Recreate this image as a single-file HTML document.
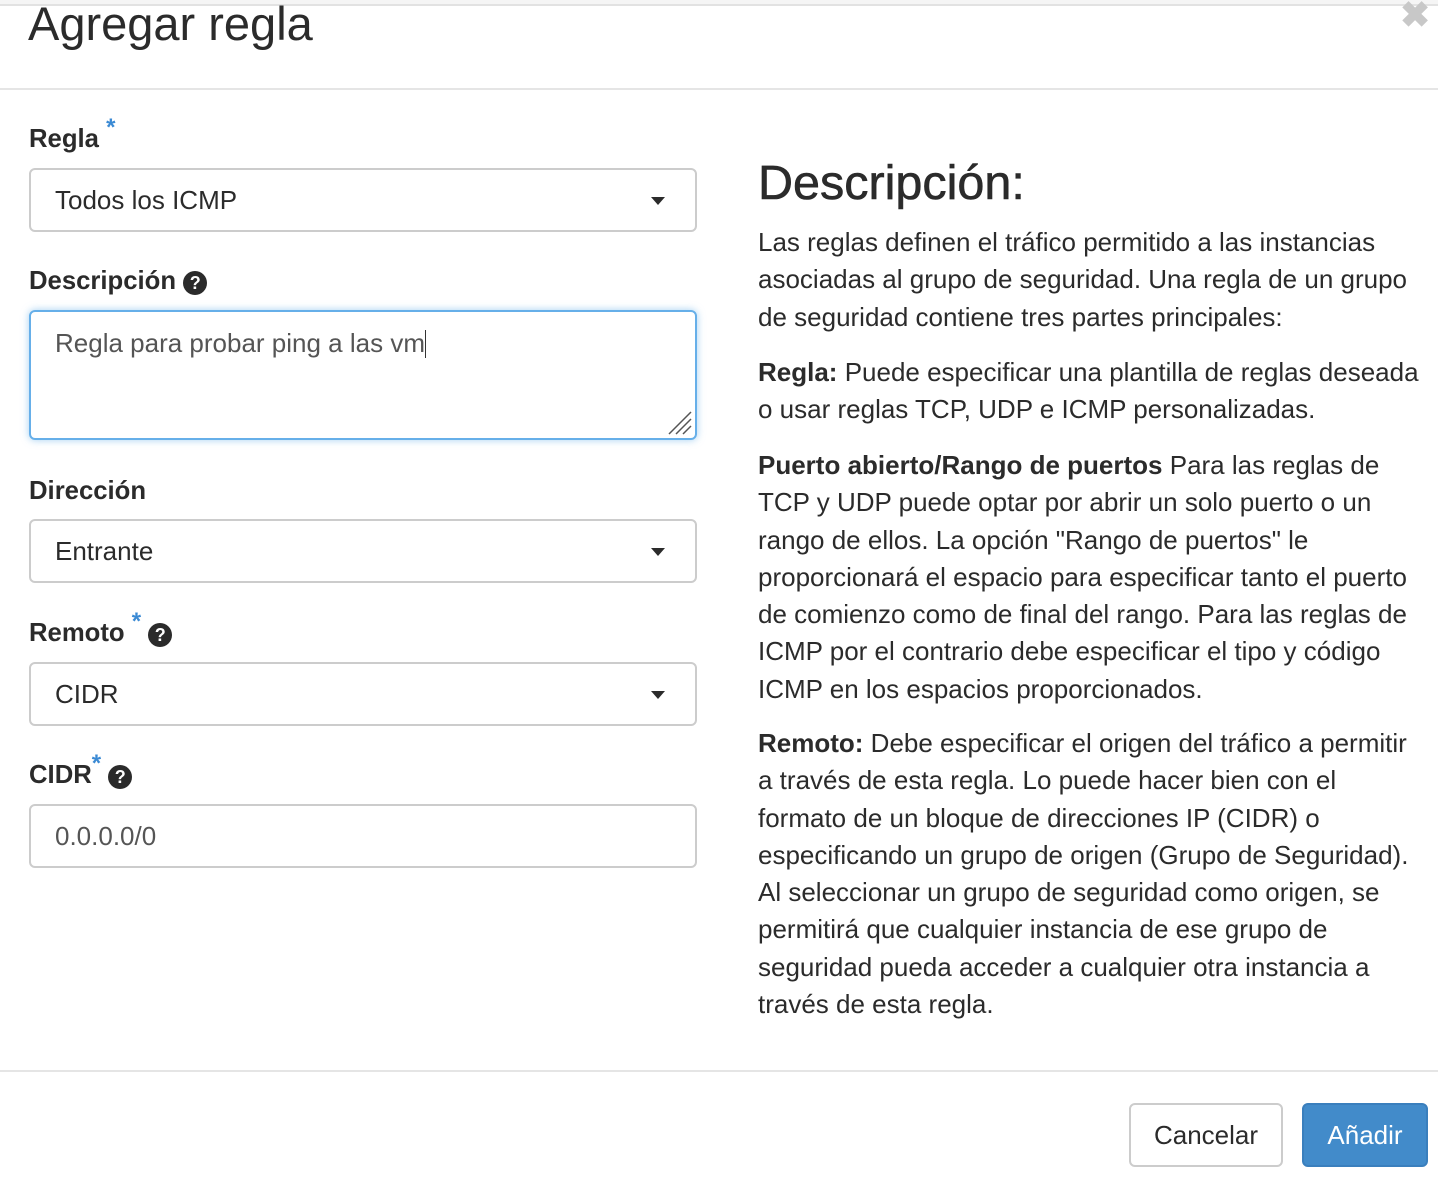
<!DOCTYPE html>
<html><head><meta charset="utf-8"><style>
*{box-sizing:border-box;margin:0;padding:0}
body{width:1438px;height:1196px;background:#fff;font-family:"Liberation Sans",Arial,sans-serif;color:#333;position:relative;overflow:hidden}
.a{position:absolute}
.topbar{left:0;top:0;width:1438px;height:6px;background:#f5f5f5;border-bottom:2px solid #e2e2e2}
.title{left:28px;top:-5px;font-size:47px;line-height:58px;color:#2b2b2b}
.hline{left:0;width:1438px;height:2px;background:#e5e5e5}
.lbl{left:29px;font-size:25.7px;font-weight:bold;line-height:30px;color:#2b2b2b;white-space:nowrap}
.star{color:#3b8ad4;font-size:24px;position:relative;top:-12px}
.q{display:inline-block;width:24px;height:24px;border-radius:50%;background:#2b2b2b;color:#fff;font-size:18px;line-height:24px;text-align:center;vertical-align:0px;font-weight:bold}
.box{left:29px;width:668px;height:64px;border:2px solid #ccc;border-radius:6px;font-size:26px;padding-left:24px;line-height:60px;color:#2b2b2b}
.caret{position:absolute;right:30px;top:27px;width:0;height:0;border-left:7px solid transparent;border-right:7px solid transparent;border-top:8px solid #2b2b2b}
.rt{left:758px;font-size:26px;line-height:37.3px;color:#2b2b2b;white-space:nowrap}
.btn{top:1103px;height:64px;border-radius:6px;font-size:26px;line-height:60px;text-align:center}
</style></head><body>
<div class="a topbar"></div>
<div class="a title">Agregar regla</div>
<div class="a" style="left:1400px;top:-6px;font-size:36px;font-weight:bold;color:#c8c8c8">✖</div>
<div class="a hline" style="top:88px"></div>

<div class="a lbl" style="top:124px">Regla <span class="star">*</span></div>
<div class="a box" style="top:168px">Todos los ICMP<div class="caret"></div></div>

<div class="a lbl" style="top:266px">Descripción <span class="q">?</span></div>
<div class="a box" style="top:310px;height:130px;border-color:#66afe9;box-shadow:0 0 8px rgba(102,175,233,.6);line-height:30px;padding-top:16px;color:#555">Regla para probar ping a las vm<span style="display:inline-block;width:1px;height:28px;background:#333;vertical-align:-6px"></span>
<svg style="position:absolute;right:2px;bottom:2px" width="26" height="26"><path d="M2 24 L24 2 M9 24 L24 9 M16 24 L24 16" stroke="#555" stroke-width="1.5"/></svg></div>

<div class="a lbl" style="top:476px">Dirección</div>
<div class="a box" style="top:519px">Entrante<div class="caret"></div></div>

<div class="a lbl" style="top:618px">Remoto <span class="star">*</span> <span class="q">?</span></div>
<div class="a box" style="top:662px">CIDR<div class="caret"></div></div>

<div class="a lbl" style="top:760px">CIDR<span class="star">*</span> <span class="q">?</span></div>
<div class="a box" style="top:804px;color:#555">0.0.0.0/0</div>

<div class="a" style="left:758px;top:153px;font-size:48.5px;line-height:60px;color:#2b2b2b;-webkit-text-stroke:0.6px #2b2b2b">Descripción:</div>
<div class="a rt" style="top:224px">Las reglas definen el tráfico permitido a las instancias<br>asociadas al grupo de seguridad. Una regla de un grupo<br>de seguridad contiene tres partes principales:</div>
<div class="a rt" style="top:354px"><b>Regla:</b> Puede especificar una plantilla de reglas deseada<br>o usar reglas TCP, UDP e ICMP personalizadas.</div>
<div class="a rt" style="top:447px"><b>Puerto abierto/Rango de puertos</b> Para las reglas de<br>TCP y UDP puede optar por abrir un solo puerto o un<br>rango de ellos. La opción "Rango de puertos" le<br>proporcionará el espacio para especificar tanto el puerto<br>de comienzo como de final del rango. Para las reglas de<br>ICMP por el contrario debe especificar el tipo y código<br>ICMP en los espacios proporcionados.</div>
<div class="a rt" style="top:725px"><b>Remoto:</b> Debe especificar el origen del tráfico a permitir<br>a través de esta regla. Lo puede hacer bien con el<br>formato de un bloque de direcciones IP (CIDR) o<br>especificando un grupo de origen (Grupo de Seguridad).<br>Al seleccionar un grupo de seguridad como origen, se<br>permitirá que cualquier instancia de ese grupo de<br>seguridad pueda acceder a cualquier otra instancia a<br>través de esta regla.</div>

<div class="a hline" style="top:1070px"></div>
<div class="a btn" style="left:1129px;width:154px;border:2px solid #ccc;color:#2b2b2b">Cancelar</div>
<div class="a btn" style="left:1302px;width:126px;background:#428bca;border:2px solid #3a7fbd;color:#fff">Añadir</div>
</body></html>
